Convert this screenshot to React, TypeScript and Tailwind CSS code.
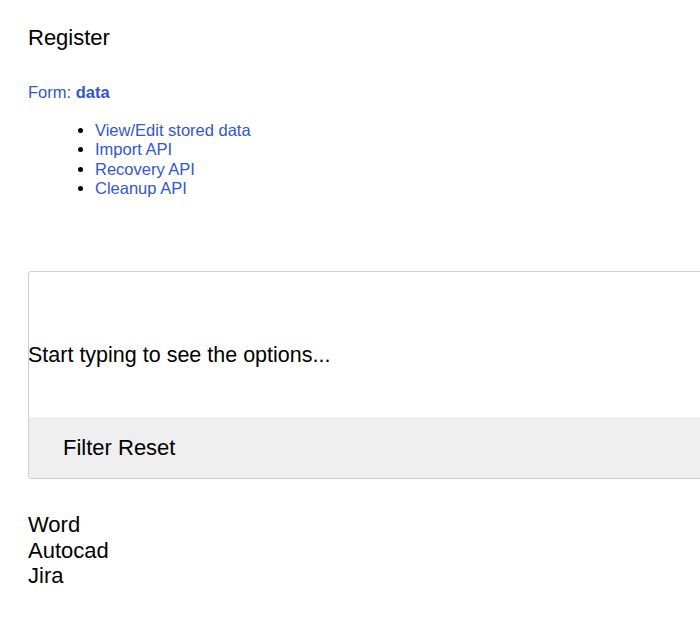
import React from "react";

export default function App() {
  const links = ["View/Edit stored data", "Import API", "Recovery API", "Cleanup API"];
  return (
    <div className="min-h-[632px] w-[700px] overflow-hidden bg-white text-black" style={{ fontFamily: '"Liberation Sans", Arial, sans-serif' }}>
      <div className="pl-[28px] pt-[25px]">
        <div className="text-[22px] leading-[25px]">Register</div>
        <div className="mt-[33px] text-[16.5px] leading-[19px] text-[#3256d0]">
          Form: <span className="font-bold">data</span>
        </div>
        <ul className="mt-[19px] list-disc pl-[67px] text-[16.5px] leading-[19.3px] text-[#3256d0] marker:text-black">
          {links.map((l) => (
            <li key={l}>
              <a href="#" className="text-[#3256d0]">{l}</a>
            </li>
          ))}
        </ul>
        <div className="mt-[73px] w-[720px] overflow-hidden rounded-[3px] border border-[#cfcfcf]">
          <div className="flex h-[145px] items-center -ml-px pt-[20px] text-[21.5px]">Start typing to see the options...</div>
          <div className="flex h-[61px] items-center bg-[#efefef] pl-[34px] text-[22px]">Filter Reset</div>
        </div>
        <div className="mt-[33px] text-[22px] leading-[25.5px]">
          <div>Word</div>
          <div>Autocad</div>
          <div>Jira</div>
        </div>
      </div>
    </div>
  );
}
